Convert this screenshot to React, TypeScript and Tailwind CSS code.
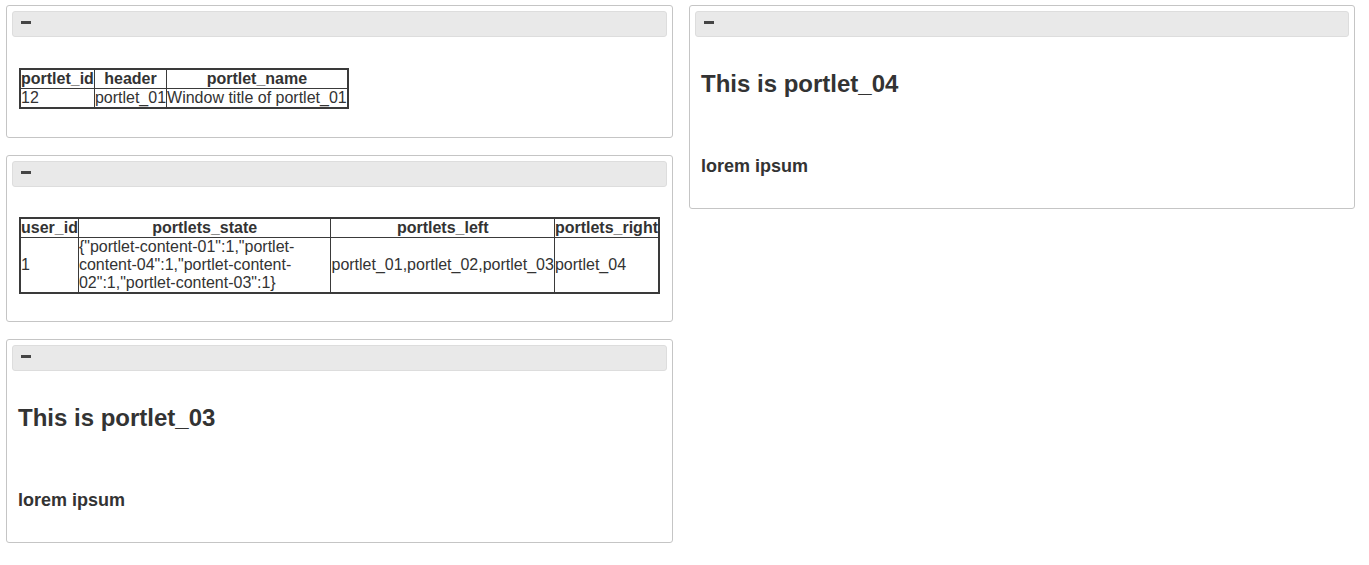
const cellBorder = 'border border-[#3a3a3a] p-0';

const PortletHeader = () => (
  <div className="h-[26px] bg-[#e9e9e9] border border-[#dddddd] rounded-[3px] flex items-start pt-[9px] pl-[8px]">
    <span className="block w-[10px] h-[3px] bg-[#454545]" />
  </div>
);

const Portlet = ({ children }: { children: React.ReactNode }) => (
  <div className="border border-[#c5c5c5] rounded-[3px] p-[5px] bg-white">
    <PortletHeader />
    {children}
  </div>
);

const TextPortlet = ({ name }: { name: string }) => (
  <Portlet>
    <div className="pt-[34px] pb-[27px] px-[6px]">
      <h3 className="text-[24px] leading-[26px] font-bold">This is {name}</h3>
      <h4 className="mt-[59px] text-[18px] leading-[20px] font-bold">lorem ipsum</h4>
    </div>
  </Portlet>
);

export default function App() {
  return (
    <div className="min-h-screen bg-white text-[#333333] font-['Liberation_Sans',Arial,sans-serif] text-[14px] pl-[6px] pt-[5px] flex gap-[16px] items-start">
      <div className="w-[667px] flex flex-col gap-[17px]">
        <Portlet>
          <div className="pt-[31px] pb-[23px] px-[7px]">
            <table className="border-collapse border-2 border-[#3a3a3a] text-[16px] leading-[18px]">
              <thead>
                <tr>
                  <th className={cellBorder}>portlet_id</th>
                  <th className={cellBorder}>header</th>
                  <th className={cellBorder}>portlet_name</th>
                </tr>
              </thead>
              <tbody>
                <tr>
                  <td className={cellBorder}>12</td>
                  <td className={cellBorder}>portlet_01</td>
                  <td className={cellBorder}>Window title of portlet_01</td>
                </tr>
              </tbody>
            </table>
          </div>
        </Portlet>

        <Portlet>
          <div className="pt-[30px] pb-[22px] px-[7px]">
            <table className="border-collapse border-2 border-[#3a3a3a] text-[16px] leading-[18px]">
              <thead>
                <tr>
                  <th className={cellBorder}>user_id</th>
                  <th className={cellBorder}>portlets_state</th>
                  <th className={cellBorder}>portlets_left</th>
                  <th className={cellBorder}>portlets_right</th>
                </tr>
              </thead>
              <tbody>
                <tr>
                  <td className={cellBorder}>1</td>
                  <td className={cellBorder}>
                    {'{"portlet-content-01":1,"portlet-content-04":1,"portlet-content-02":1,"portlet-content-03":1}'}
                  </td>
                  <td className={cellBorder}>portlet_01,portlet_02,portlet_03</td>
                  <td className={cellBorder}>portlet_04</td>
                </tr>
              </tbody>
            </table>
          </div>
        </Portlet>

        <TextPortlet name="portlet_03" />
      </div>

      <div className="w-[666px]">
        <TextPortlet name="portlet_04" />
      </div>
    </div>
  );
}
